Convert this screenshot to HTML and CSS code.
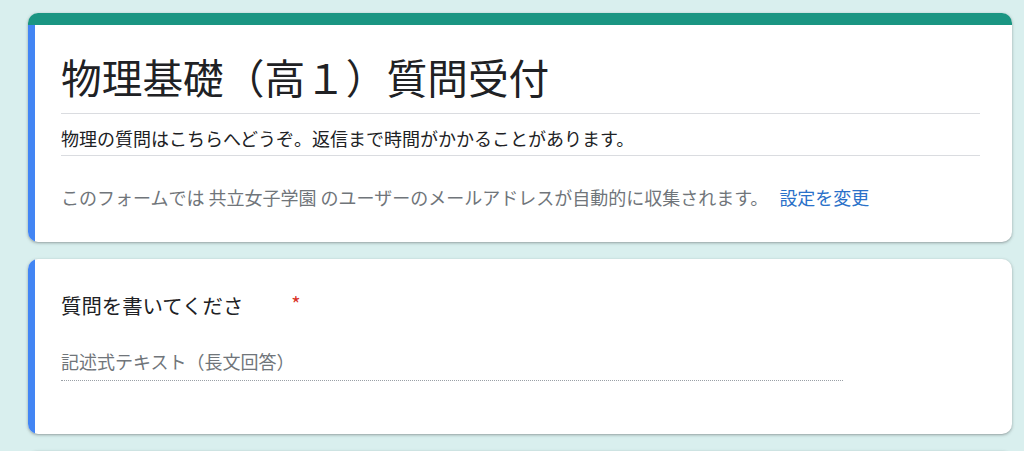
FILE: index.html
```html
<!DOCTYPE html>
<html lang="ja">
<head>
    <meta charset="UTF-8">
    <meta name="viewport" content="width=device-width, initial-scale=1.0">
    <title>物理基礎（高１）質問受付</title>
    <link rel="stylesheet" href="styles.css">
</head>
<body>

    <div class="form">

        <div class="card">
            <div class="card-top"></div>
            <div class="card-body header-body">
                <h1 class="form-title">物理基礎（高１）質問受付</h1>
                <p class="form-desc">物理の質問はこちらへどうぞ。返信まで時間がかかることがあります。</p>
                <p class="form-note">このフォームでは 共立女子学園 のユーザーのメールアドレスが自動的に収集されます。<a href="#" class="note-link">設定を変更</a></p>
            </div>
        </div>

        <div class="card">
            <div class="card-body question-body">
                <div class="question-title">質問を書いてくださ<span class="required">*</span></div>
                <div class="answer-hint">記述式テキスト（長文回答）</div>
            </div>
        </div>

        <div class="card">
            <div class="card-body empty-body"></div>
        </div>

    </div>

</body>
</html>
```

FILE: styles.css
```css
body {
    margin: 0;
    background-color: #d9efee;
    font-family: "Noto Sans CJK JP", "Noto Sans", sans-serif;
    color: #202124;
}
.form {
    display: flex;
    flex-direction: column;
    gap: 17px;
    padding: 13px 12px 0 28px;
}
.card {
    background-color: #fff;
    border-radius: 10px;
    overflow: hidden;
    box-shadow: 0 1px 2px rgba(60, 64, 67, 0.3), 0 1px 3px 1px rgba(60, 64, 67, 0.12);
}
.card-top {
    height: 12px;
    background-color: #1a9582;
}
.card-body {
    border-left: 7px solid #4285f4;
    padding-left: 26px;
    padding-right: 32px;
}
.header-body {
    padding-top: 27px;
    padding-bottom: 33px;
}
.form-title {
    margin: 0;
    padding-bottom: 11px;
    font-size: 40.7px;
    line-height: 50px;
    font-weight: 400;
    border-bottom: 1px solid #dadce0;
}
.form-desc {
    margin: 0;
    padding: 12px 0 5px;
    font-size: 18px;
    line-height: 24px;
    border-bottom: 1px solid #dadce0;
}
.form-note {
    margin: 29px 0 0;
    font-size: 18px;
    line-height: 24px;
    color: #70757a;
}
.note-link {
    margin-left: 11px;
    color: #2a71c9;
    text-decoration: none;
}
.question-body {
    padding-top: 31px;
    padding-bottom: 53px;
}
.question-title {
    font-size: 20.4px;
    line-height: 28px;
}
.required {
    margin-left: 48px;
    font-size: 20px;
    color: #d93025;
    vertical-align: 2px;
}
.answer-hint {
    width: 782px;
    margin-top: 30px;
    padding-bottom: 7px;
    font-size: 18px;
    line-height: 24px;
    color: #70757a;
    border-bottom: 1px dotted #9aa0a6;
}
.empty-body {
    height: 120px;
}
```
